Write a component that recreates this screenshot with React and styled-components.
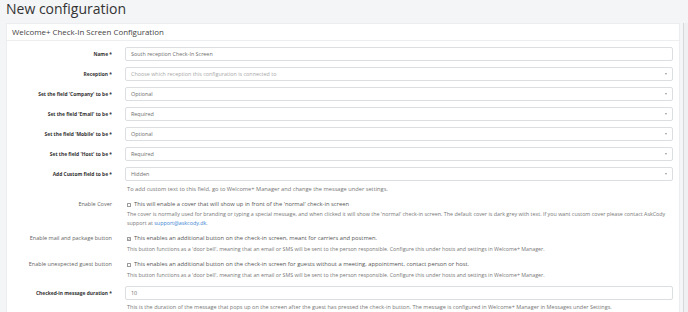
import styled, { createGlobalStyle } from 'styled-components';

const GlobalStyle = createGlobalStyle`
  html, body {
    margin: 0;
    padding: 0;
    background: #f4f5f7;
    font-family: 'Open Sans', 'Liberation Sans', sans-serif;
    color: #333;
  }
`;

const Page = styled.div`
  width: 688px;
  height: 312px;
  overflow: hidden;
`;

const Title = styled.h1`
  margin: 0;
  padding-left: 6px;
  height: 23px;
  font-size: 14px;
  line-height: 18px;
  font-weight: 400;
  color: #333;
`;

const Main = styled.div`
  display: flex;
  align-items: stretch;
  padding-left: 6px;
`;

const Card = styled.div`
  flex: 1;
  background: #fff;
  border: 1px solid #ebedf0;
  border-bottom: none;
`;

const Track = styled.div`
  width: 4px;
  margin-left: 3px;
  border-left: 1px solid #d6d8db;
  background: #eef0f2;
`;

const CardHeader = styled.div`
  height: 16px;
  padding-left: 5px;
  font-size: 7.9px;
  line-height: 17px;
  color: #444;
  border-bottom: 1px solid #eceef0;
`;

const CardBody = styled.div`
  display: flex;
  flex-direction: column;
  gap: 6px;
  padding: 6px 6px 0 0;
`;

const Group = styled.div`
  display: grid;
  grid-template-columns: 118px 1fr;
  align-items: ${(p) => (p.$top ? 'start' : 'center')};
`;

const Label = styled.div`
  padding-right: 13px;
  text-align: right;
  font-size: ${(p) => (p.$bold ? 4.9 : 5.5)}px;
  line-height: ${(p) => (p.$tall ? 14 : 9)}px;
  font-weight: ${(p) => (p.$bold ? 700 : 400)};
  color: ${(p) => (p.$bold ? '#333' : '#666')};
  white-space: nowrap;
`;

const Control = styled.div`
  display: flex;
  flex-direction: column;
`;

const Field = styled.div`
  position: relative;
  box-sizing: border-box;
  height: 14px;
  padding-left: 5px;
  border: 1px solid #dcdfe2;
  border-radius: 2px;
  background: #fff;
  font-size: 5.4px;
  line-height: 12px;
  color: ${(p) => (p.$placeholder ? '#a8a8a8' : '#6d6d6d')};
`;

const Caret = styled.span`
  position: absolute;
  right: 5px;
  top: 5px;
  width: 0;
  height: 0;
  border-left: 1.5px solid transparent;
  border-right: 1.5px solid transparent;
  border-top: 2px solid #9a9a9a;
`;

const Help = styled.div`
  margin-top: ${(p) => p.$gap ?? 4}px;
  padding-left: 2px;
  font-size: ${(p) => p.$size || 5.5}px;
  line-height: 9px;
  color: #777;
  white-space: nowrap;
`;

const CheckLine = styled.label`
  display: flex;
  align-items: center;
  gap: 3px;
  padding-left: 2px;
  font-size: 5.8px;
  line-height: 9px;
  color: #555;
`;

const Box = styled.span`
  box-sizing: border-box;
  flex: none;
  width: 4px;
  height: 4px;
  border: 0.6px solid #9a9a9a;
  border-radius: 0.5px;
  background: #fff;
  display: inline-flex;
  align-items: center;
  justify-content: center;
`;

const Link = styled.a`
  color: #3c7fd2;
  text-decoration: none;
`;

const Select = ({ value, placeholder }) => (
  <Field $placeholder={placeholder}>
    {value}
    <Caret />
  </Field>
);

const Checkbox = ({ checked, children }) => (
  <CheckLine>
    <Box>
      {checked && (
        <svg width="4" height="4" viewBox="0 0 10 10">
          <path d="M1.5 5.2 L4 7.8 L8.8 2" fill="none" stroke="#222" strokeWidth="2" />
        </svg>
      )}
    </Box>
    {children}
  </CheckLine>
);

const selects = [
  ["Set the field 'Company' to be *", 'Optional'],
  ["Set the field 'Email' to be *", 'Required'],
  ["Set the field 'Mobile' to be *", 'Optional'],
  ["Set the field 'Host' to be *", 'Required'],
];

const doorBell =
  "This button functions as a 'door bell', meaning that an email or SMS will be sent to the person responsible. Configure this under hosts and settings in Welcome+ Manager.";

const App = () => {
  return (
    <Page>
      <GlobalStyle />
      <Title>New configuration</Title>
      <Main>
        <Card>
          <CardHeader>Welcome+ Check-In Screen Configuration</CardHeader>
          <CardBody>
            <Group>
              <Label $bold>Name *</Label>
              <Field>South reception Check-In Screen</Field>
            </Group>
            <Group>
              <Label $bold>Reception *</Label>
              <Select placeholder value="Choose which reception this configuration is connected to" />
            </Group>
            {selects.map(([label, value]) => (
              <Group key={label}>
                <Label $bold>{label}</Label>
                <Select value={value} />
              </Group>
            ))}
            <Group $top>
              <Label $bold $tall>Add Custom field to be *</Label>
              <Control>
                <Select value="Hidden" />
                <Help $size={5.7}>
                  To add custom text to this field, go to Welcome+ Manager and change the message under settings.
                </Help>
              </Control>
            </Group>
            <Group $top>
              <Label>Enable Cover</Label>
              <Control>
                <Checkbox>This will enable a cover that will show up in front of the 'normal' check-in screen</Checkbox>
                <Help $gap={1} $size={5.35}>
                  The cover is normally used for branding or typing a special message, and when clicked it will show
                  the 'normal' check-in screen. The default cover is dark grey with text. If you want custom cover
                  please contact AskCody
                  <br />
                  support at <Link href="#">support@askcody.dk</Link>.
                </Help>
              </Control>
            </Group>
            <Group $top>
              <Label>Enable mail and package button</Label>
              <Control>
                <Checkbox checked>
                  This enables an additional button on the check-in screen, meant for carriers and postmen.
                </Checkbox>
                <Help $gap={2} $size={5.3}>{doorBell}</Help>
              </Control>
            </Group>
            <Group $top>
              <Label>Enable unexpected guest button</Label>
              <Control>
                <Checkbox>
                  This enables an additional button on the check-in screen for guests without a meeting, appointment,
                  contact person or host.
                </Checkbox>
                <Help $gap={2} $size={5.3}>{doorBell}</Help>
              </Control>
            </Group>
            <Group $top>
              <Label $bold $tall>Checked-in message duration *</Label>
              <Control>
                <Field>10</Field>
                <Help $gap={3}>
                  This is the duration of the message that pops up on the screen after the guest has pressed the
                  check-in button. The message is configured in Welcome+ Manager in Messages under Settings.
                </Help>
              </Control>
            </Group>
          </CardBody>
        </Card>
        <Track />
      </Main>
    </Page>
  );
};

export default App;
